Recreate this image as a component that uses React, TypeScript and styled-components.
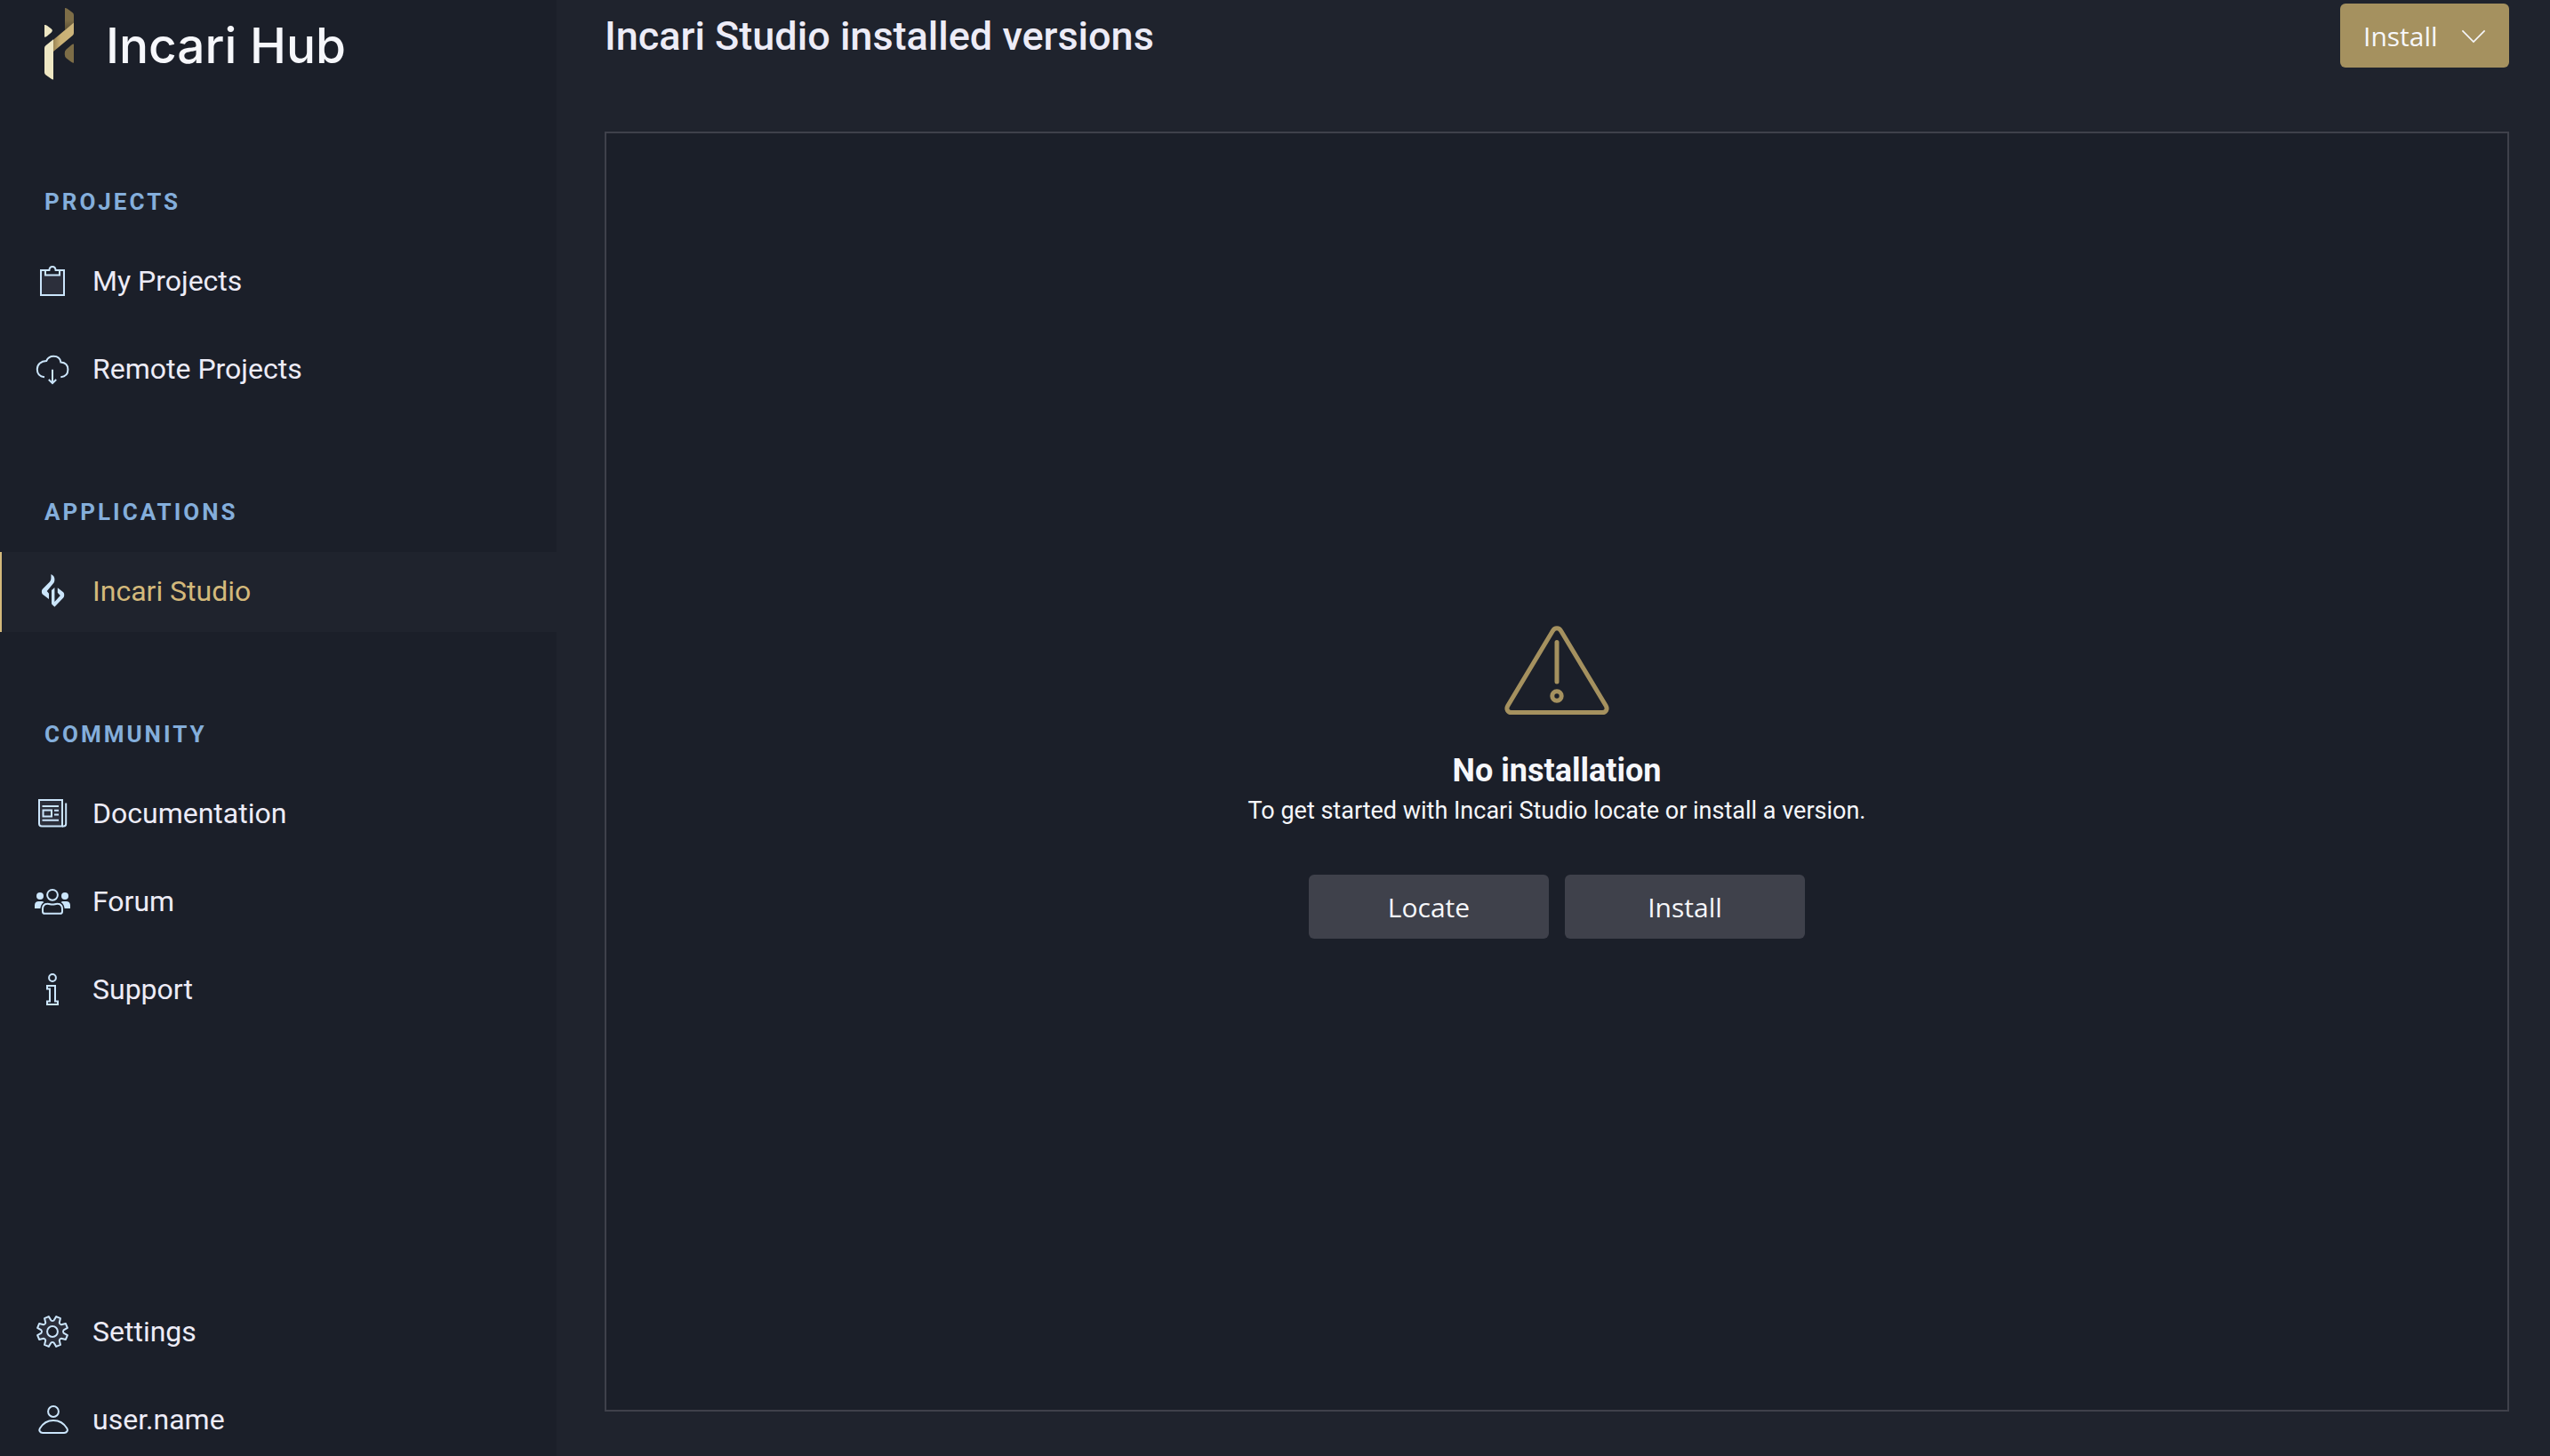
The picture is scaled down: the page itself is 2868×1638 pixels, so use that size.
import React from "react";
import styled, { createGlobalStyle } from "styled-components";

const color = {
  panel: "#1b1f29",
  page: "#1f232d",
  line: "#3f414b",
  gold: "#a5915f",
  goldText: "#d3b97b",
  heading: "#84aedb",
  icon: "#cbe5fb",
  iconFill: "#2c2f3b",
  text: "#edecf7",
  white: "#f6f7fb",
};

const GlobalStyle = createGlobalStyle`
  *, *::before, *::after { box-sizing: border-box; }
  body { margin: 0; background: ${color.page}; }
`;

const Layout = styled.div`
  display: flex;
  height: 100vh;
  overflow: hidden;
  background: ${color.page};
  color: ${color.text};
  font-family: Roboto, "Liberation Sans", sans-serif;
`;

const Sidebar = styled.aside`
  display: flex;
  flex: 0 0 626px;
  flex-direction: column;
  background: ${color.panel};
`;

const Brand = styled.div`
  display: flex;
  align-items: center;
  gap: 36px;
  margin-bottom: 122px;
  padding: 9px 50px 0;
`;

const BrandName = styled.span`
  padding-top: 2px;
  color: ${color.white};
  font-family: Inter, sans-serif;
  font-size: 55px;
  font-weight: 500;
  line-height: 64px;
`;

const Nav = styled.nav`
  display: flex;
  flex-direction: column;
  gap: 100px;
`;

const SectionTitle = styled.h2`
  margin: 0 0 30px;
  padding-left: 50px;
  color: ${color.heading};
  font-size: 26px;
  font-weight: 700;
  letter-spacing: 3px;
  line-height: 30px;
`;

const NavList = styled.ul`
  display: flex;
  flex-direction: column;
  gap: 9px;
  margin: 0;
  padding: 0;
  list-style: none;
`;

const NavLink = styled.a<{ $active?: boolean }>`
  display: flex;
  align-items: center;
  gap: 24px;
  height: 90px;
  padding: 0 36px 2px;
  border-left: 2px solid ${(p) => (p.$active ? color.goldText : "transparent")};
  background: ${(p) => (p.$active ? color.page : "transparent")};
  color: ${(p) => (p.$active ? color.goldText : color.text)};
  font-size: 32px;
  line-height: 38px;
  text-decoration: none;
`;

const AccountNav = styled.nav`
  margin: auto 0 -5px;
`;

const Main = styled.main`
  display: flex;
  flex: 1;
  flex-direction: column;
  gap: 72px;
  min-width: 0;
  padding: 4px 46px 50px 54px;
`;

const Header = styled.header`
  display: flex;
  align-items: center;
  justify-content: space-between;
`;

const Title = styled.h1`
  margin: 0;
  padding-top: 2px;
  font-size: 45px;
  font-weight: 500;
  line-height: 52px;
`;

const Button = styled.button<{ $primary?: boolean }>`
  display: flex;
  align-items: center;
  justify-content: ${(p) => (p.$primary ? "space-between" : "center")};
  width: ${(p) => (p.$primary ? "190px" : "270px")};
  height: 72px;
  padding: 2px 26px 0;
  border: 0;
  border-radius: 6px;
  background: ${(p) => (p.$primary ? color.gold : color.line)};
  color: ${color.white};
  font-family: "Open Sans", "Noto Sans", sans-serif;
  font-size: 30px;
  line-height: 40px;
`;

const Panel = styled.section`
  display: flex;
  flex: 1;
  flex-direction: column;
  align-items: center;
  justify-content: center;
  padding-top: 24px;
  border: 2px solid ${color.line};
  background: ${color.panel};
  color: ${color.white};
`;

const EmptyTitle = styled.h2`
  margin: 39px 0 5px;
  font-size: 36px;
  font-weight: 700;
  line-height: 44px;
`;

const EmptyText = styled.p`
  margin: 0 0 54px;
  font-size: 27px;
  line-height: 36px;
`;

const Actions = styled.div`
  display: flex;
  gap: 18px;
`;

const IconSvg = styled.svg`
  flex: none;
  width: 42px;
  height: 42px;
  fill: none;
  stroke: ${color.icon};
  stroke-width: 2;
`;

const Icon = ({ children }: { children: React.ReactNode }) => (
  <IconSvg viewBox="0 0 42 42" aria-hidden="true">
    {children}
  </IconSvg>
);

const ClipboardIcon = () => (
  <Icon>
    <path d="M8 9H34V37H8Z" fill={color.iconFill} />
    <path d="M13 9V14.5H29V9H24.6C24.4 6.5 23 5 21 5S17.6 6.5 17.4 9Z" fill={color.panel} />
  </Icon>
);

const CloudIcon = () => (
  <Icon>
    <path d="M12 30.3C7 29.7 3.8 26.4 3.8 21.6C3.8 16 8 12.2 14.2 12C15.8 8.4 18.6 6.8 22.2 6.8C26.6 6.8 29.8 9.4 30.4 13.6C35.4 14 38.4 17.2 38.4 21.8C38.4 26.6 35.4 29.8 30.3 30.3" />
    <path d="M21 21.7V37M16.8 33L21 37.2L25.2 33" />
  </Icon>
);

const StudioIcon = () => (
  <Icon>
    <g fill={color.icon} stroke="none">
      <path d="M19.4 2C22.4 3.6 23.4 5.4 23.4 8C23.4 10 23 11.2 21.6 12.8L14.8 21L17 23.7V30L9.8 24.6C8.6 23.4 8.6 20.2 9.8 18.8L18 10.4C19.4 8.8 19.6 7.6 19.4 2Z" />
      <path d="M20 20L23.4 17V33L29.8 26L26.8 22.8V17.2L33.2 22.2C34.6 23.6 34.6 27 33.2 28.6L23.4 38.8L21 36.6C20.2 35.8 20 35.2 20 34Z" />
    </g>
  </Icon>
);

const NewsIcon = () => (
  <Icon>
    <path d="M6 6H32V35.6H9C7 35.6 6 34.6 6 32.6Z" fill={color.iconFill} />
    <path d="M32 35.6H33.6C35.4 35.6 36.2 34.6 36.2 32.8V9.5M9.5 13H28M10.5 17.6H20V24.4H10.5ZM23 17.8H28M23 22.4H28M9.5 28.8H28" />
  </Icon>
);

const PeopleIcon = () => (
  <Icon>
    <circle cx="21" cy="13.8" r="5.9" />
    <path d="M21 24.6C23.4 24.6 24 23.8 26.4 23.8C30 23.8 32 26.2 32 29.6V32.4C32 34 31.2 34.8 29.6 34.8H12.4C10.8 34.8 10 34 10 32.4V29.6C10 26.2 12 23.8 15.6 23.8C18 23.8 18.6 24.6 21 24.6Z" />
    <g fill={color.icon} stroke="none">
      <circle cx="7" cy="15" r="4" />
      <circle cx="35" cy="15" r="4" />
      <path d="M1 29V25.6C1 22.8 2.6 21 5.4 21H8.6C9.8 21 10.8 21.4 11.4 22C9.2 23.2 7.8 25.6 7.4 29Z" />
      <path d="M41 29V25.6C41 22.8 39.4 21 36.6 21H33.4C32.2 21 31.2 21.4 30.6 22C32.8 23.2 34.2 25.6 34.6 29Z" />
    </g>
  </Icon>
);

const InfoIcon = () => (
  <Icon>
    <circle cx="21" cy="8" r="3.9" />
    <path d="M15 17H24V34.6H27V38H15V34.6H18V20.6H15Z" />
  </Icon>
);

const gearPath = Array.from({ length: 8 }, (_, i) => {
  const at = (deg: number, r: number) => {
    const a = ((i * 45 + deg) * Math.PI) / 180;
    return `${(21 + r * Math.sin(a)).toFixed(2)} ${(21 - r * Math.cos(a)).toFixed(2)}`;
  };
  return `${i ? "L" : "M"}${at(-7, 12.6)}Q${at(0, 11.4)} ${at(7, 12.6)}L${at(14, 17.4)}L${at(31, 17.4)}`;
}).join("");

const GearIcon = () => (
  <Icon>
    <path d={`${gearPath}Z`} fill={color.iconFill} strokeLinejoin="round" />
    <circle cx="21" cy="21" r="5.9" fill={color.panel} />
  </Icon>
);

const UserIcon = () => (
  <Icon>
    <circle cx="22" cy="12" r="5.9" />
    <path d="M10 36C7.2 36 5.4 33.4 6.8 31C10.4 25 16 22 22 22S33.8 25 37.4 31C38.8 33.4 37 36 34.2 36Z" />
  </Icon>
);

const LogoMark = () => (
  <svg width="33" height="81" viewBox="0 0 33 81" aria-hidden="true">
    <defs>
      <linearGradient id="band" x1="0" x2="1" y1="0" y2="0">
        <stop offset="0" stopColor="#9c8656" />
        <stop offset="0.35" stopColor="#c9b075" />
        <stop offset="1" stopColor="#cdb57b" />
      </linearGradient>
      <linearGradient id="tail" x1="0" x2="0" y1="0" y2="1">
        <stop offset="0.55" stopColor="#7d6d47" />
        <stop offset="1" stopColor="#5b4f34" />
      </linearGradient>
    </defs>
    <path d="M23 0Q24.4 0 25.6 0.8L31.4 5Q33 6.2 33 8V17L23 25Z" fill="url(#tail)" />
    <path d="M10 35.7L33 16.4V28Q33 29.8 31.6 31L10 49Z" fill="url(#band)" />
    <path d="M0 45Q0 43.3 1.4 42.2L10 35.2V80.6Q8.6 80.6 7.4 79.6L1.4 75.2Q0 74.2 0 72.4Z" fill="#eee7c3" />
    <path d="M0 19Q1.6 18.8 2.8 19.8L7.8 23.6Q10 25.4 7.8 27.4L2.8 31.8Q1.6 32.8 0 32.8Z" fill="#eee7c3" />
    <path d="M33 40.6V61.8Q31.6 61.8 30.2 60.8L24.6 56.4Q22.8 55 22.8 52.6V50.4Q22.8 48 24.6 46.4L30.2 41.8Q31.6 40.6 33 40.6Z" fill="#7d6d47" />
  </svg>
);

const WarningIcon = () => (
  <svg width="118" height="102" viewBox="0 0 118 102" fill="none" stroke={color.gold} strokeWidth="5" strokeLinecap="round" aria-hidden="true">
    <path d="M54.2 6C56.6 1.8 61.4 1.8 63.8 6L114.2 90C116.4 93.8 114.2 97.6 110.2 97.6H7.8C3.8 97.6 1.6 93.8 3.8 90Z" />
    <path d="M59 18.4V63" />
    <circle cx="59" cy="79" r="5.2" />
  </svg>
);

const ChevronIcon = () => (
  <svg width="28" height="16" viewBox="0 0 28 16" fill="none" stroke={color.white} strokeWidth="1.6" aria-hidden="true">
    <path d="M1.4 1.4L14 14L26.6 1.4" />
  </svg>
);

type Item = { label: string; icon: React.ComponentType; active?: boolean };

const sections: { title: string; items: Item[] }[] = [
  {
    title: "PROJECTS",
    items: [
      { label: "My Projects", icon: ClipboardIcon },
      { label: "Remote Projects", icon: CloudIcon },
    ],
  },
  {
    title: "APPLICATIONS",
    items: [{ label: "Incari Studio", icon: StudioIcon, active: true }],
  },
  {
    title: "COMMUNITY",
    items: [
      { label: "Documentation", icon: NewsIcon },
      { label: "Forum", icon: PeopleIcon },
      { label: "Support", icon: InfoIcon },
    ],
  },
];

const accountItems: Item[] = [
  { label: "Settings", icon: GearIcon },
  { label: "user.name", icon: UserIcon },
];

const Items = ({ items }: { items: Item[] }) => (
  <NavList>
    {items.map(({ label, icon: ItemIcon, active }) => (
      <li key={label}>
        <NavLink href="#" $active={active} aria-current={active ? "page" : undefined}>
          <ItemIcon />
          {label}
        </NavLink>
      </li>
    ))}
  </NavList>
);

export default function App() {
  return (
    <Layout>
      <GlobalStyle />
      <Sidebar>
        <Brand>
          <LogoMark />
          <BrandName>Incari Hub</BrandName>
        </Brand>
        <Nav>
          {sections.map((section) => (
            <section key={section.title}>
              <SectionTitle>{section.title}</SectionTitle>
              <Items items={section.items} />
            </section>
          ))}
        </Nav>
        <AccountNav>
          <Items items={accountItems} />
        </AccountNav>
      </Sidebar>
      <Main>
        <Header>
          <Title>Incari Studio installed versions</Title>
          <Button type="button" $primary>
            Install
            <ChevronIcon />
          </Button>
        </Header>
        <Panel>
          <WarningIcon />
          <EmptyTitle>No installation</EmptyTitle>
          <EmptyText>To get started with Incari Studio locate or install a version.</EmptyText>
          <Actions>
            <Button type="button">Locate</Button>
            <Button type="button">Install</Button>
          </Actions>
        </Panel>
      </Main>
    </Layout>
  );
}
